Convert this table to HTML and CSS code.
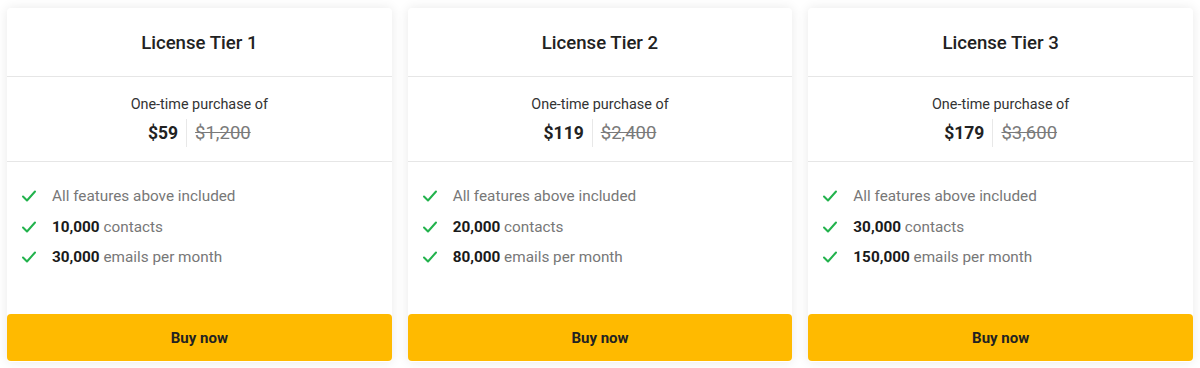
FILE: index.html
```html
<!DOCTYPE html>
<html>
<head>
<meta charset="utf-8">
<link rel="stylesheet" href="styles.css">
</head>
<body>
<div class="tiers">
  <div class="card">
    <div class="head">License Tier 1</div>
    <div class="price">
      <div class="label">One-time purchase of</div>
      <div class="amounts"><span class="now">$59</span><span class="was">$1,200</span></div>
    </div>
    <ul class="features">
      <li><svg class="check" viewBox="0 0 16 16"><path d="M2 8.5l4 4 8-9"/></svg><span>All features above included</span></li>
      <li><svg class="check" viewBox="0 0 16 16"><path d="M2 8.5l4 4 8-9"/></svg><span><b>10,000</b> contacts</span></li>
      <li><svg class="check" viewBox="0 0 16 16"><path d="M2 8.5l4 4 8-9"/></svg><span><b>30,000</b> emails per month</span></li>
    </ul>
    <button class="buy">Buy now</button>
  </div>
  <div class="card">
    <div class="head">License Tier 2</div>
    <div class="price">
      <div class="label">One-time purchase of</div>
      <div class="amounts"><span class="now">$119</span><span class="was">$2,400</span></div>
    </div>
    <ul class="features">
      <li><svg class="check" viewBox="0 0 16 16"><path d="M2 8.5l4 4 8-9"/></svg><span>All features above included</span></li>
      <li><svg class="check" viewBox="0 0 16 16"><path d="M2 8.5l4 4 8-9"/></svg><span><b>20,000</b> contacts</span></li>
      <li><svg class="check" viewBox="0 0 16 16"><path d="M2 8.5l4 4 8-9"/></svg><span><b>80,000</b> emails per month</span></li>
    </ul>
    <button class="buy">Buy now</button>
  </div>
  <div class="card">
    <div class="head">License Tier 3</div>
    <div class="price">
      <div class="label">One-time purchase of</div>
      <div class="amounts"><span class="now">$179</span><span class="was">$3,600</span></div>
    </div>
    <ul class="features">
      <li><svg class="check" viewBox="0 0 16 16"><path d="M2 8.5l4 4 8-9"/></svg><span>All features above included</span></li>
      <li><svg class="check" viewBox="0 0 16 16"><path d="M2 8.5l4 4 8-9"/></svg><span><b>30,000</b> contacts</span></li>
      <li><svg class="check" viewBox="0 0 16 16"><path d="M2 8.5l4 4 8-9"/></svg><span><b>150,000</b> emails per month</span></li>
    </ul>
    <button class="buy">Buy now</button>
  </div>
</div>
</body>
</html>
```
FILE: styles.css
```css
* { box-sizing: border-box; }
html, body { margin: 0; background: #ffffff; }
body {
  font-family: Roboto, "Liberation Sans", sans-serif;
  padding: 8px 7px 6px 7px;
}
.tiers {
  display: grid;
  grid-template-columns: repeat(3, 1fr);
  gap: 16px;
}
.card {
  background: #fff;
  height: 354px;
  display: flex;
  flex-direction: column;
  border-radius: 4px;
  box-shadow: 0 0 12px rgba(0, 0, 0, 0.09);
}
.head {
  height: 69px;
  display: flex;
  align-items: center;
  justify-content: center;
  padding-top: 2px;
  font-size: 18.6px;
  font-weight: 500;
  color: #222;
  border-bottom: 1px solid #e6e6e6;
}
.price {
  height: 85px;
  border-bottom: 1px solid #e6e6e6;
  display: flex;
  flex-direction: column;
  align-items: center;
  padding-top: 19px;
}
.label {
  font-size: 14.4px;
  color: #333;
  line-height: 18px;
}
.amounts {
  display: flex;
  align-items: center;
  margin-top: 5px;
  line-height: 28px;
}
.now {
  font-size: 17.5px;
  font-weight: 700;
  color: #222;
  padding-right: 8px;
  border-right: 1px solid #e8e8e8;
}
.was {
  font-size: 18.5px;
  color: #7a7a7a;
  text-decoration: line-through;
  padding-left: 8px;
}
.features {
  list-style: none;
  margin: 0;
  padding: 19px 0 0 15px;
  flex: 1;
}
.features li {
  display: flex;
  align-items: center;
  height: 30.5px;
  font-size: 15.3px;
  color: #777;
}
.features b { color: #1a1a1a; font-weight: 700; }
.check {
  width: 16px;
  height: 16px;
  margin-right: 15px;
  margin-left: -1px;
  fill: none;
  stroke: #22b24c;
  stroke-width: 2;
  stroke-linecap: round;
  stroke-linejoin: round;
}
.buy {
  height: 47px;
  margin-bottom: 1px;
  border: none;
  border-radius: 4px;
  background: #ffba00;
  color: #222;
  font-family: Roboto, "Liberation Sans", sans-serif;
  font-size: 15px;
  font-weight: 700;
}
```
